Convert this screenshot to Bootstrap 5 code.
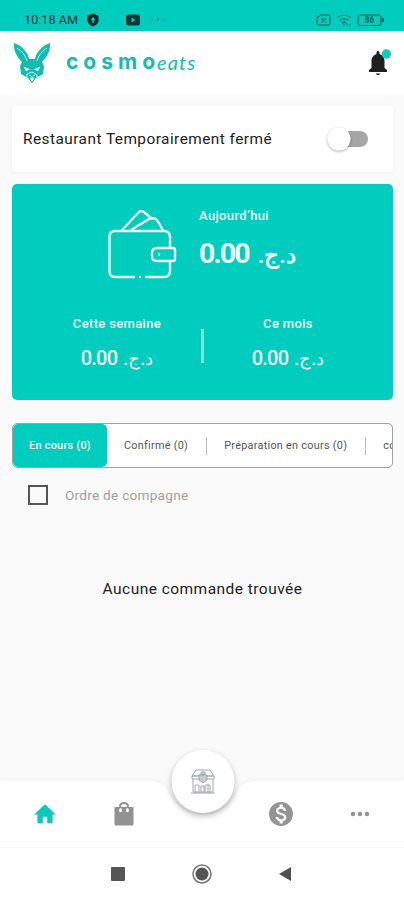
<!DOCTYPE html>
<html lang="fr">
<head>
<meta charset="utf-8">
<meta name="viewport" content="width=device-width, initial-scale=1">
<title>Cosmoeats</title>
<link href="https://cdn.jsdelivr.net/npm/bootstrap@5.3.0/dist/css/bootstrap.min.css" rel="stylesheet">
<style>
:root{--teal:#00cdbd}
body{font-family:Roboto,"Noto Sans",sans-serif;background:#fafafa;color:#222;height:900px;overflow:hidden;line-height:1.2}
svg{display:block;flex:none}
.status{height:31px;background:var(--teal);padding:8px 20px 0 24px;color:#093f3b}
.clock{font-size:12.7px;width:62px;color:#073a36}
.topbar{height:64px;padding:0 13px 0 13px}
.logo-word{font:700 21px/24px Inter,sans-serif;letter-spacing:5px;color:#12bdb0;margin:-3px 0 0 15px}
.logo-script{font:italic 400 20px/24px Lato,sans-serif;letter-spacing:1.1px;color:#12bdb0;margin:-2px 0 0 -3px}
.closed-card{height:66px;margin-top:11px;padding:0 25px 0 11px;border-radius:4px;box-shadow:0 0 8px rgba(0,0,0,.035)}
.closed-label{font-size:15.4px;letter-spacing:.46px}
.toggle{width:40px;height:24px}
.earn{height:216px;margin-top:12px;background:var(--teal);border-radius:5px;color:#effffd}
.earn-top{height:123px;padding:24px 0 0 95px}
.cap{font-size:13px;font-weight:500;line-height:16px;letter-spacing:.35px;white-space:nowrap}
.money{direction:ltr;white-space:nowrap;display:flex;align-items:baseline}
.big{font-size:28.5px;font-weight:700;line-height:34px;margin-top:13px;gap:9px}
.big b{font-weight:700;letter-spacing:-1.9px}
.big bdi{font-size:22.5px}
.mid{font-size:20px;font-weight:500;line-height:24px;margin-top:14px;gap:6px;justify-content:center}
.mid b{font-weight:500;letter-spacing:-.8px}
.mid bdi{font-size:18px}
.bar{width:3px;height:34px;background:#7fe3da;margin-top:22px}
.half{width:168px;padding-top:9px}
.tabs{height:45px;margin-top:23px;border:1px solid #a2a2a2;border-radius:5px;font-size:10.8px;letter-spacing:.3px;white-space:nowrap;overflow:hidden;color:#555}
.tabs span{padding:1px 17.5px 0 17px}
.tab-on{width:94px;background:var(--teal);color:#fff;border-radius:5px;font-weight:500;padding-top:1px;align-self:stretch}
.sep{width:1.5px;height:18px;background:#bbb;flex:none}
.box{width:20px;height:20px;border:2px solid #555}
.campaign{margin:16px 0 0 16px;gap:17px;color:#a0a0a0;font-size:13.6px;letter-spacing:.26px;height:22px}
.campaign .caption-text{padding-top:1px}
.empty{font-size:15.5px;letter-spacing:.46px;margin-top:73px;line-height:20px}
.dock{position:absolute;left:0;right:0;bottom:0;height:154px}
.dock-items{height:67px;margin-top:34px}
.dock-items>div{width:78.7px}
.keys{height:53px;border-top:1px solid #f5f5f5}
.notch{position:absolute;left:0;top:0}
</style>
<script src="https://cdn.jsdelivr.net/npm/bootstrap@5.3.0/dist/js/bootstrap.bundle.min.js"></script>
</head>
<body class="position-relative">
<header>
  <div class="status d-flex align-items-center">
    <span class="clock text-nowrap">10:18 AM</span>
    <svg width="14" height="14" viewBox="0 0 14 14"><path d="M7 .5l5.500 2v5C12.500 10.500 9.500 12.500 7 13.500 4.500 12.500 1.500 10.500 1.500 7.500v-5z" fill="#052d2a"/><path d="M7 4l2 2.200L7.700 8v2H6.300V8L5 6.200z" fill="#00cdbd"/></svg>
    <svg class="ms-4" width="44" height="14" viewBox="0 0 44 14"><rect x="2" y="1.500" width="14" height="11" rx="2" fill="#073a36"/><path d="M7.500 4.500v5l4-2.500z" fill="#00cdbd"/><g fill="#078b81"><circle cx="28" cy="6.500" r="1.200"/><circle cx="34" cy="6.500" r="1.200"/><circle cx="40" cy="6.500" r="1.200"/></g></svg>
    <svg class="ms-auto" width="70" height="14" viewBox="0 0 70 14" fill="none" stroke="#0b655f" stroke-width="1.200"><path d="M6 2H14.500q1.500 0 1.500 1.500v7Q16 12 14.500 12H4.500q-1.500 0-1.500-1.500V5zM7.500 5l4.500 4.500m0-4.500L7.500 9.500"/><path d="M23 5q7-6 14 0M25.500 7.500q4.500-4 9 0M28 10q2-2 4 0M30 7v6m3-3v3m3-2v2" stroke="#0a8c82"/><rect x="44" y="2" width="23" height="10.500" rx="3"/><path d="M69 5v4" stroke-width="2"/><text x="55.500" y="10.300" font-size="8.500" font-weight="700" text-anchor="middle" fill="#0b655f" stroke="none">86</text></svg>
  </div>
  <div class="topbar bg-white d-flex align-items-center">
    <svg width="38" height="40" viewBox="0 0 38 40"><path d="M1 0C8 2 15 9 16 16h6C23 9 30 2 37 0 38 8 33 15 29 19l2 4-1 8-7 4-4 5-4-5-7-4-1-8 2-4C5 15 0 8 1 0z" fill="#12bdb0"/><path d="M4 5q8 5 10 13M34 5q-8 5-10 13" fill="none" stroke="#a8ebe5"/><path d="M10.500 23.500l7 3-4.500 1.500zM27.500 23.500l-7 3 4.500 1.500z" fill="#fff"/><path d="M14 34v-3l5-2 5 3v2M16 32l3 2 3-2" stroke="#d8f5f2" fill="none"/><path d="M17 34h4v3l-2 2-2-2z" fill="#fff" stroke="#12bdb0"/></svg>
    <span class="logo-word">cosmo</span><span class="logo-script">eats</span>
    <svg class="ms-auto" width="24" height="28" viewBox="0 0 24 28"><path d="M2 23v-2l2.500-2v-7c0-4 2.500-6 5-7V3q1.500-2 3 0v2c3 1 5 3 5 7v7L20 21v2z" fill="#1f1f1f"/><path d="M8.500 24.500h5q-2.500 3-5 0z" fill="#1f1f1f"/><circle cx="19.300" cy="5" r="4.700" fill="#12c9bb"/></svg>
  </div>
</header>
<main style="padding:0 11px 0 12px">
  <section class="closed-card bg-white d-flex align-items-center justify-content-between">
    <span class="closed-label">Restaurant Temporairement fermé</span>
    <svg class="toggle overflow-visible" viewBox="0 0 40 24"><rect x="6" y="4" width="34" height="16" rx="8" fill="#a6a6a6"/><circle cx="11" cy="12" r="11.500" fill="#fff" style="filter:drop-shadow(0 1px 1.5px rgba(0,0,0,.3))"/></svg>
  </section>
  <section class="earn">
    <div class="earn-top d-flex">
      <svg width="70" height="72" viewBox="0 0 70 72" fill="none" stroke="#effffd" stroke-width="2.400" stroke-linecap="round" stroke-linejoin="round"><path d="M27 69H8q-5.500 0-5.500-6V29Q2.500 23 8 23h49q6 0 6 6v10M63 53v10q0 6-6 6H39M33 69h.1"/><path d="M15 22L32 4q2.500-2 5 0l7 6M24 22L42 11q5-2 8 1l6 10"/><path d="M50 40h16q2 0 2 2v9q0 2-2 2H50q-5 0-5-5v-3q0-5 5-5zM52 46.500h.1"/></svg>
      <div style="padding-left:22px">
        <div class="cap">Aujourd’hui</div>
        <div class="money big"><b>0.00</b><bdi dir="rtl">د.ج.</bdi></div>
      </div>
    </div>
    <div class="d-flex justify-content-center text-center">
      <div class="half"><div class="cap">Cette semaine</div><div class="money mid"><b>0.00</b><bdi dir="rtl">د.ج.</bdi></div></div>
      <div class="bar"></div>
      <div class="half"><div class="cap">Ce mois</div><div class="money mid"><b>0.00</b><bdi dir="rtl">د.ج.</bdi></div></div>
    </div>
  </section>
  <nav class="tabs bg-white d-flex align-items-center">
    <div class="tab-on d-flex align-items-center justify-content-center flex-shrink-0">En cours (0)</div>
    <span>Confirmé (0)</span><i class="sep"></i>
    <span>Préparation en cours (0)</span><i class="sep"></i>
    <span class="pe-0">co</span>
  </nav>
  <label class="campaign d-flex align-items-center"><span class="box"></span><span class="caption-text">Ordre de compagne</span></label>
  <p class="empty text-center mb-0">Aucune commande trouvée</p>
</main>
<footer class="dock">
  <svg class="notch" width="404" height="154" viewBox="0 0 404 154"><path d="M0 35H151C164 35 166 43 171 51C186 75 220 75 235 51C240 43 242 35 255 35H404V154H0z" fill="#fff" style="filter:drop-shadow(0 -1px 2px rgba(0,0,0,.04))"/><circle cx="203" cy="35.500" r="31.500" fill="#fff" style="filter:drop-shadow(0 3px 3px rgba(0,0,0,.28))"/>
    <g fill="none" stroke="#a3a9a9"><path d="M196 24h14l4 6h-22zM192 30h22v3h-22zM193 33v13h20V33M191 47h24M199 47v-8h-4v8M205 47v-8h3v8M210 47v-8h-2M201 47v-7h3v7"/><path d="M199 29h8v5l-4 3-4-3zM201 26h4v3h-4z" fill="#c9cccc"/></g></svg>
  <div class="position-relative">
    <div class="dock-items d-flex align-items-center" style="margin-left:6px">
      <div class="d-flex justify-content-center"><svg width="26" height="26" viewBox="0 0 24 24" fill="#0cc9bb"><path d="M10 20.500v-6h4v6h5v-8h3L12 3 2 12.500h3v8z"/></svg></div>
      <div class="d-flex justify-content-center"><svg width="24" height="26" viewBox="0 0 24 26"><path d="M2.500 6h19v17q0 1.500-1.500 1.500H4Q2.500 24.500 2.500 23z" fill="#929292"/><path d="M8 9V6q0-4 4-4t4 4v3" fill="none" stroke="#929292" stroke-width="2"/><path d="M8.500 8.500v1.500m7-1.500v1.500" stroke="#fff" stroke-width="2.600" stroke-linecap="round"/></svg></div>
      <div></div>
      <div class="d-flex justify-content-center"><svg width="26" height="26" viewBox="0 0 24 24" fill="#949494"><path d="M12 1a11 11 0 1 0 0 22 11 11 0 0 0 0-22zm1.700 17.600v2.200h-3v-2.200c-2-.4-3.500-1.600-3.700-3.800h2.300c.1 1.200 1 2 2.900 2 2 0 2.500-1 2.500-1.600 0-.9-.5-1.700-2.900-2.300-2.700-.6-4.500-1.700-4.500-3.900 0-1.800 1.500-3 3.400-3.400V3.300h3v2.300c2 .5 3.100 2.100 3.200 3.700h-2.300c-.1-1.200-.7-2.100-2.500-2.100-1.600 0-2.600.8-2.600 1.800 0 .9.700 1.500 2.900 2.100s4.500 1.500 4.500 4.100c0 1.900-1.400 3-3.200 3.400z"/></svg></div>
      <div class="d-flex justify-content-center"><svg width="20" height="6" viewBox="0 0 20 6" fill="#929292"><circle cx="3" cy="3" r="2.200"/><circle cx="10" cy="3" r="2.200"/><circle cx="17" cy="3" r="2.200"/></svg></div>
    </div>
    <div class="keys d-flex align-items-center justify-content-center" style="gap:67px">
      <svg width="14" height="14"><rect width="14" height="14" rx="1" fill="#555"/></svg>
      <svg width="20" height="20"><circle cx="10" cy="10" r="9" fill="none" stroke="#777" stroke-width="1.500"/><circle cx="10" cy="10" r="6.500" fill="#555"/></svg>
      <svg width="14" height="16"><path d="M12 1v14L0 8z" fill="#505050"/></svg>
    </div>
  </div>
</footer>
</body>
</html>
